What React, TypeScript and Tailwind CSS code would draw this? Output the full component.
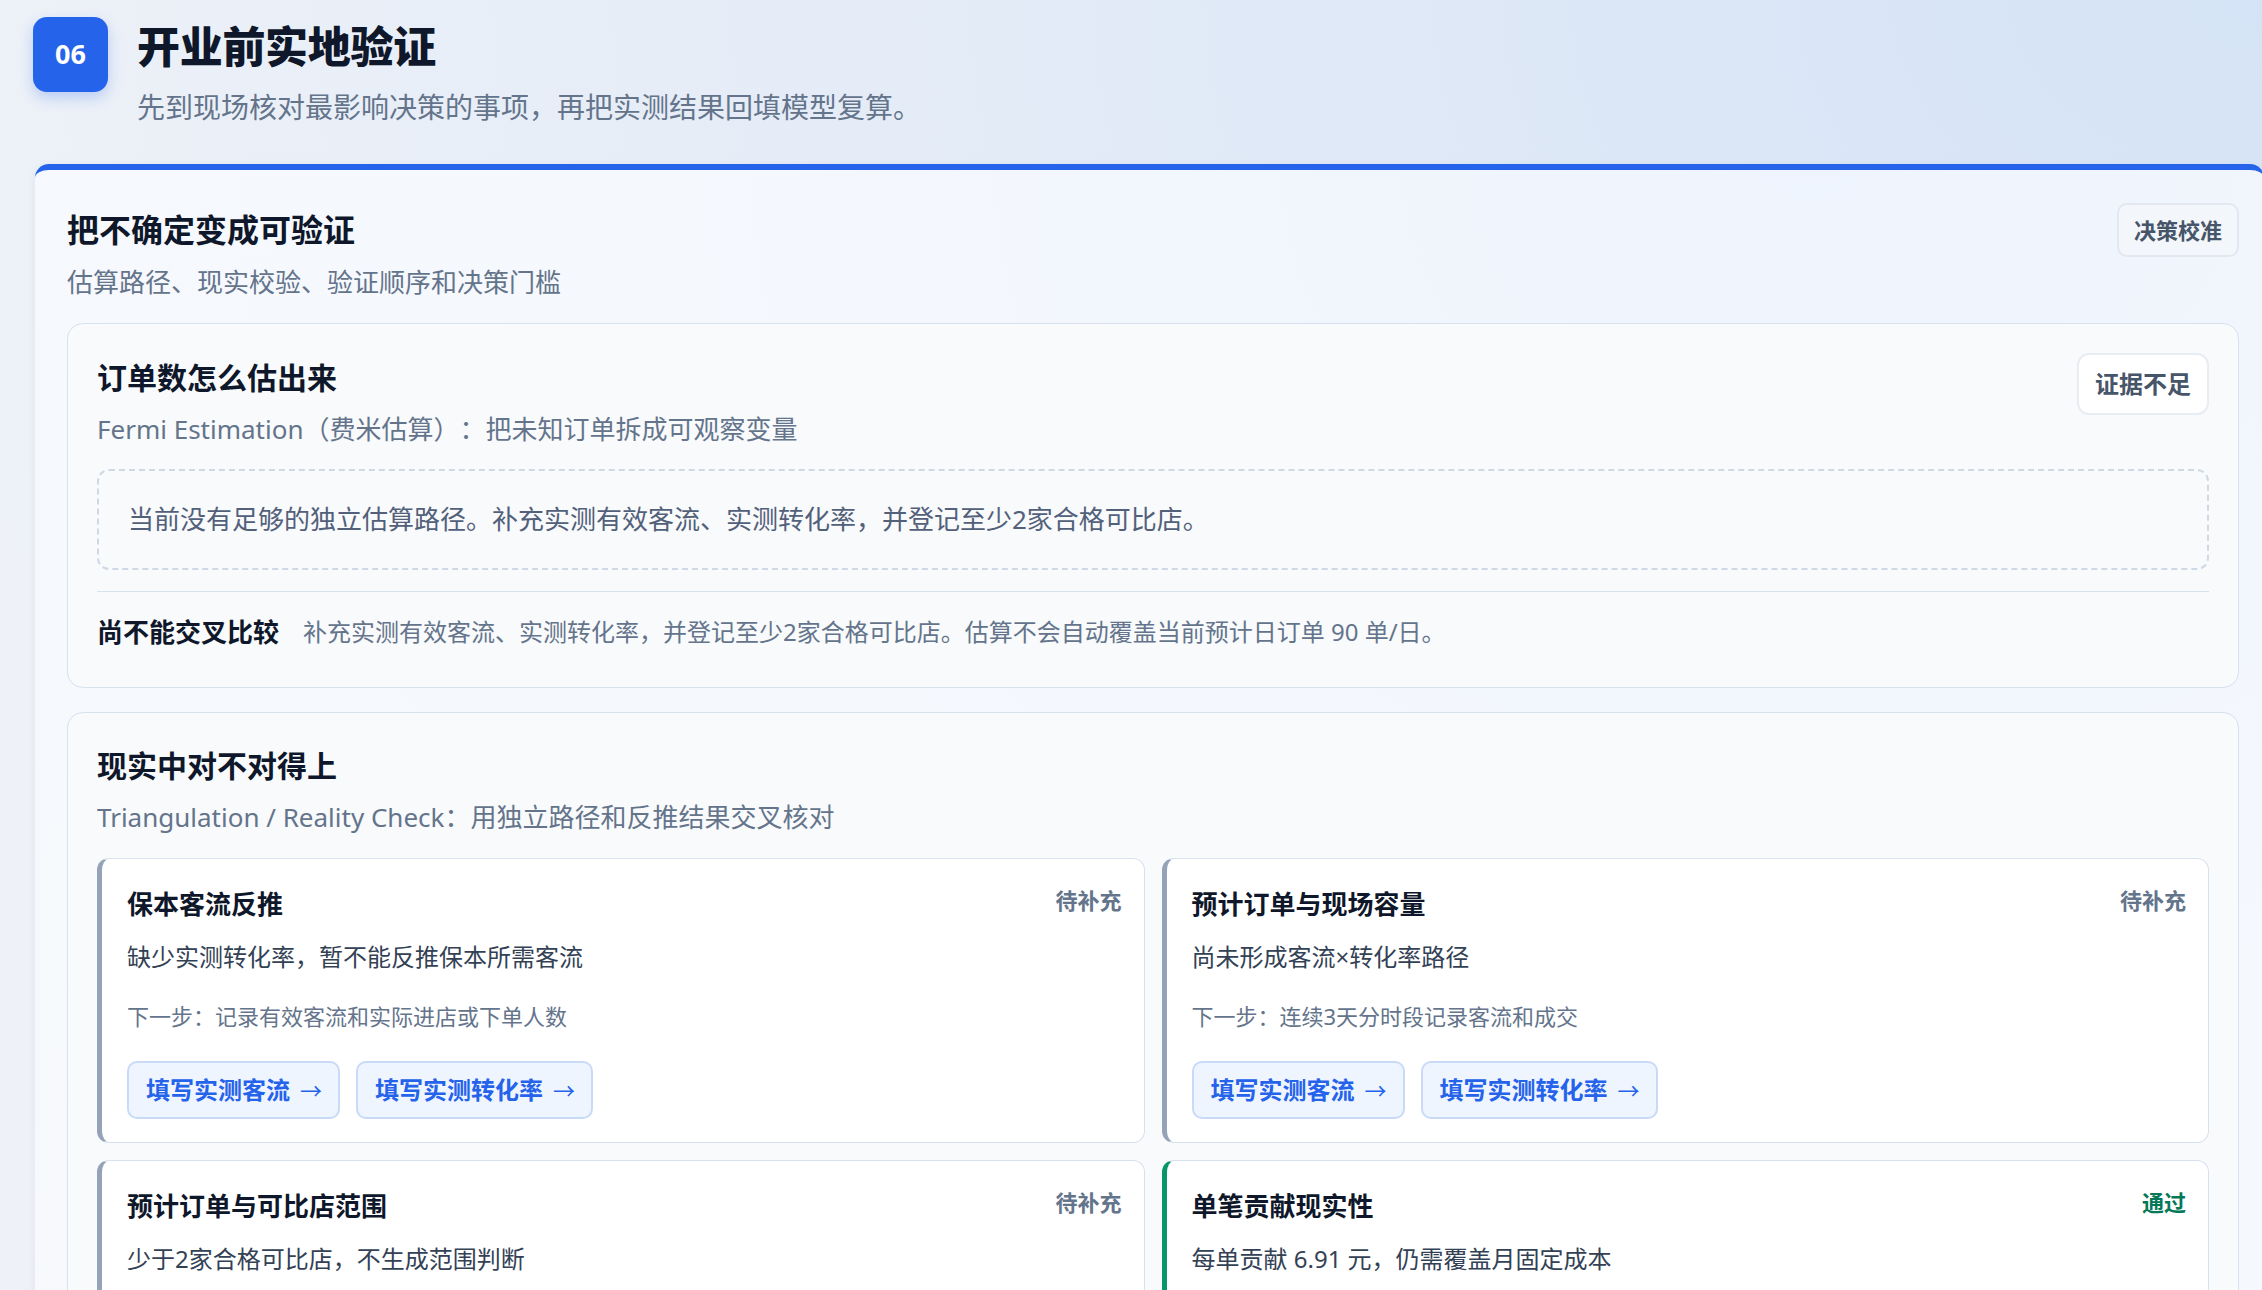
import React from 'react';

/**
 * 开业前实地验证 — decision calibration section
 */

type Status = 'pending' | 'pass';

interface CheckItem {
  title: string;
  status: Status;
  summary: string;
  next?: string;
  actions?: string[];
}

const CHECKS: CheckItem[] = [
  {
    title: '保本客流反推',
    status: 'pending',
    summary: '缺少实测转化率，暂不能反推保本所需客流',
    next: '下一步：记录有效客流和实际进店或下单人数',
    actions: ['填写实测客流', '填写实测转化率'],
  },
  {
    title: '预计订单与现场容量',
    status: 'pending',
    summary: '尚未形成客流×转化率路径',
    next: '下一步：连续3天分时段记录客流和成交',
    actions: ['填写实测客流', '填写实测转化率'],
  },
  {
    title: '预计订单与可比店范围',
    status: 'pending',
    summary: '少于2家合格可比店，不生成范围判断',
    next: '下一步：登记至少2家合格可比店的日订单',
    actions: ['登记可比店'],
  },
  {
    title: '单笔贡献现实性',
    status: 'pass',
    summary: '每单贡献 6.91 元，仍需覆盖月固定成本',
    next: '下一步：核对采购价和平台抽成',
  },
];

const FONT = "font-['Noto_Sans','Noto_Sans_CJK_SC',sans-serif]";

export default function App() {
  return (
    <div
      className={`${FONT} min-h-screen w-full overflow-hidden bg-[radial-gradient(ellipse_at_100%_0%,#d5e3f6_0%,#e3ebf7_40%,#eef2f8_75%)] pb-10 [text-spacing-trim:space-all]`}
    >
      <SectionHeader />
      <main className="ml-[35px] mt-[37px] w-[2229px] rounded-[14px] border-t-[6px] border-[#2563eb] bg-[radial-gradient(ellipse_at_80%_0%,#eef4fd_0%,#f5f8fd_45%,#f7f9fc_100%)] pb-10 pl-[32px] pr-[25px] pt-[33px] shadow-[0_2px_10px_rgba(15,23,42,0.06)]">
        <PanelHeader />
        <EstimationCard />
        <RealityCard />
      </main>
    </div>
  );
}

/**
 * Page header with step number
 */
function SectionHeader() {
  return (
    <header className="flex items-start gap-[29px] pl-[33px] pt-[17px]">
      <div className="flex h-[75px] w-[75px] items-center justify-center rounded-[14px] bg-[#2563eb] text-[27px] font-bold text-white shadow-[0_6px_14px_rgba(37,99,235,0.25)]">
        06
      </div>
      <div>
        <h1 className="text-[43px] font-black leading-[60px] tracking-[-0.3px] text-[#0f172a]">开业前实地验证</h1>
        <p className="mt-[10px] text-[28px] leading-[40px] text-[#64748b]">
          先到现场核对最影响决策的事项，再把实测结果回填模型复算。
        </p>
      </div>
    </header>
  );
}

function PanelHeader() {
  return (
    <div className="flex items-start justify-between">
      <div>
        <h2 className="text-[32px] font-bold leading-[54px] text-[#0f172a]">把不确定变成可验证</h2>
        <p className="mt-[7px] text-[26px] leading-[36px] text-[#64748b]">估算路径、现实校验、验证顺序和决策门槛</p>
      </div>
      <span className="flex h-[54px] items-center rounded-[10px] border-2 border-[#e3e8f0] bg-[#f3f6fb] px-[15px] text-[22px] font-bold text-[#475569]">
        决策校准
      </span>
    </div>
  );
}

/**
 * Fermi estimation card
 */
function EstimationCard() {
  return (
    <section className="mt-[23px] rounded-[16px] border border-[#d8e1ee] bg-[#f8fafc] px-[29px] pb-[37px] pt-[29px]">
      <div className="flex items-start justify-between">
        <div className="mt-[5px]">
          <h3 className="text-[30px] font-bold leading-[40px] text-[#0f172a]">订单数怎么估出来</h3>
          <p className="mt-[13px] text-[26px] leading-[36px] text-[#64748b]">
            Fermi Estimation（费米估算）：把未知订单拆成可观察变量
          </p>
        </div>
        <span className="flex h-[62px] items-center rounded-[12px] border-2 border-[#e8edf3] bg-white px-[16px] text-[24px] font-bold text-[#475569]">
          证据不足
        </span>
      </div>

      <div className="mt-[22px] rounded-[12px] border-2 border-dashed border-[#cfd8e5] px-[29px] py-[29px] text-[26px] leading-[39px] text-[#52607a]">
        当前没有足够的独立估算路径。补充实测有效客流、实测转化率，并登记至少2家合格可比店。
      </div>

      <div className="mt-[21px] h-px bg-[#d8e1ee]" />

      <p className="mt-[22px] flex items-center gap-[24px] leading-[36px]">
        <strong className="text-[26px] font-bold text-[#0f172a]">尚不能交叉比较</strong>
        <span className="text-[24px] text-[#64748b]">
          补充实测有效客流、实测转化率，并登记至少2家合格可比店。估算不会自动覆盖当前预计日订单 90 单/日。
        </span>
      </p>
    </section>
  );
}

/**
 * Triangulation card with check grid
 */
function RealityCard() {
  return (
    <section className="mt-[24px] rounded-[16px] border border-[#d8e1ee] bg-[#f8fafc] px-[29px] pb-[31px] pt-[33px]">
      <h3 className="text-[30px] font-bold leading-[40px] text-[#0f172a]">现实中对不对得上</h3>
      <p className="mt-[13px] text-[26px] leading-[36px] text-[#64748b]">
        Triangulation / Reality Check：用独立路径和反推结果交叉核对
      </p>
      <div className="mt-[23px] grid grid-cols-2 gap-[17px]">
        {CHECKS.map((item) => (
          <CheckCard key={item.title} item={item} />
        ))}
      </div>
    </section>
  );
}

function CheckCard({ item }: { item: CheckItem }) {
  const pass = item.status === 'pass';
  return (
    <div
      className={`rounded-[12px] border border-[#d8e1ee] bg-white pb-[23px] pl-[25px] pr-[22px] pt-[30px] border-l-[5px] ${
        pass ? 'border-l-[#059669]' : 'border-l-[#94a3b8]'
      }`}
    >
      <div className="flex items-start justify-between">
        <h4 className="text-[26px] font-bold leading-[30px] text-[#0f172a]">{item.title}</h4>
        <span className={`text-[22px] font-bold leading-[22px] ${pass ? 'text-[#047857]' : 'text-[#64748b]'}`}>
          {pass ? '通过' : '待补充'}
        </span>
      </div>
      <p className="mt-[22px] text-[24px] leading-[32px] text-[#334155]">{item.summary}</p>
      {item.next && <p className="mt-[28px] text-[22px] leading-[30px] text-[#64748b]">{item.next}</p>}
      {item.actions && (
        <div className="mt-[30px] flex gap-[16px]">
          {item.actions.map((label) => (
            <button
              key={label}
              className="flex h-[58px] items-center gap-[10px] rounded-[10px] border-2 border-[#c9daf8] bg-[#eff5ff] pl-[17px] pr-[16px] text-[24px] font-bold text-[#2563eb]"
            >
              {label}
              <span className="text-[22px] font-normal">→</span>
            </button>
          ))}
        </div>
      )}
    </div>
  );
}
